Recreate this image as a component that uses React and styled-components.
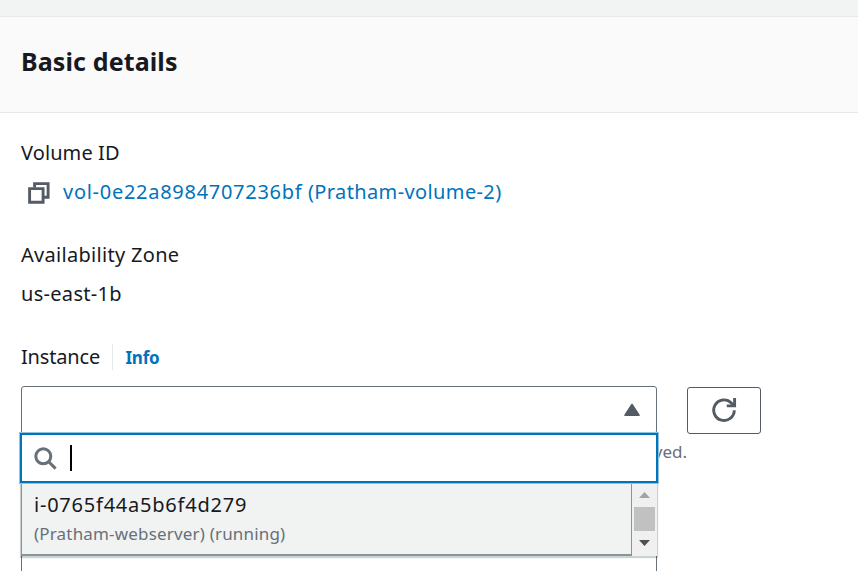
import React from 'react';
import styled, { createGlobalStyle } from 'styled-components';

const GlobalStyle = createGlobalStyle`
  * { box-sizing: border-box; }
  body {
    margin: 0;
    background: #fff;
    color: #16191f;
    font-family: "Noto Sans", "Open Sans", sans-serif;
    overflow: hidden;
  }
`;

const Page = styled.main`
  height: 571px;
  overflow: hidden;
  display: flex;
  flex-direction: column;
  background: #fff;
`;

const TopStrip = styled.div`
  flex: none;
  height: 16px;
  background: #f2f3f3;
`;

const PanelHeader = styled.header`
  flex: none;
  height: 97px;
  padding: 0 21px 7px;
  display: flex;
  align-items: center;
  background: #fafafa;
  border-top: 1px solid #e4e9e9;
  border-bottom: 1px solid #e4e9e9;
`;

const Title = styled.h2`
  margin: 0;
  font-size: 25px;
  line-height: 36px;
  font-weight: 700;
  letter-spacing: 0.12px;
`;

const PanelBody = styled.section`
  padding: 25px 0 0 21px;
`;

const Field = styled.div`
  display: flex;
  flex-direction: column;
  gap: 9px;
  margin-bottom: 33px;
`;

const Text = styled.div`
  height: 30px;
  font-size: 20px;
  line-height: 30px;
  white-space: nowrap;
  letter-spacing: ${(p) => p.$spacing || 0}px;
`;

const LinkRow = styled.div`
  display: flex;
  align-items: center;
  height: 30px;
  padding-left: 7px;
  gap: 13px;
`;

const CopySvg = styled.svg`
  flex: none;
  margin-top: 2px;
`;

const VolumeLink = styled.a`
  color: #0073bb;
  font-size: 20px;
  line-height: 30px;
  letter-spacing: 0.38px;
  white-space: nowrap;
`;

const VolumeId = styled.span`
  letter-spacing: 0.72px;
`;

const LabelRow = styled.div`
  display: flex;
  align-items: center;
  height: 30px;
`;

const InfoLink = styled.a`
  height: 26px;
  margin-left: 12px;
  padding-left: 12.4px;
  border-left: 1px solid #e4e9e9;
  color: #0073bb;
  font-size: 17px;
  line-height: 28px;
  font-weight: 700;
  letter-spacing: -0.2px;
`;

const ControlRow = styled.div`
  position: relative;
  display: flex;
  align-items: flex-start;
  gap: 30px;
  margin-top: 14px;
`;

const SelectBox = styled.div`
  width: 636px;
  height: 48px;
  padding-right: 16px;
  display: flex;
  align-items: center;
  justify-content: flex-end;
  border: 1px solid #687078;
  border-radius: 3px;
`;

const RefreshButton = styled.button`
  width: 74px;
  height: 47px;
  margin-top: 1px;
  padding: 0 0 2px;
  display: flex;
  align-items: center;
  justify-content: center;
  border: 1px solid #545b64;
  border-radius: 3px;
  background: #fff;
`;

const Hint = styled.div`
  width: 666px;
  height: 26px;
  margin-top: 5px;
  color: #687078;
  font-size: 17px;
  line-height: 26px;
  text-align: right;
`;

const NextField = styled.div`
  width: 636px;
  height: 60px;
  margin-top: 80px;
  border: 1px solid #687078;
  border-radius: 3px;
`;

const Dropdown = styled.div`
  position: absolute;
  top: 47px;
  left: -1px;
  width: 638px;
`;

const SearchField = styled.div`
  position: relative;
  z-index: 1;
  display: flex;
  align-items: center;
  height: 50px;
  padding-left: 12px;
  background: #fff;
  border: 2px solid #0073bb;
  box-shadow: 0 0 0 1px #8fc3de;
`;

const Caret = styled.span`
  width: 2px;
  height: 26px;
  margin-left: 13px;
  background: #000;
`;

const OptionPanel = styled.div`
  display: flex;
  height: 73px;
  margin: 0 1px;
  background: #f0f0f0;
  box-shadow: 0 1px 1px 1px rgba(0, 28, 36, 0.2);
`;

const Option = styled.div`
  width: 611px;
  padding: 6px 0 0 12px;
  background: #f1f3f3;
  border: 1px solid #879596;
  border-top: 0;
  border-bottom-width: 2px;
`;

const OptionTitle = styled.div`
  height: 32px;
  font-size: 20px;
  line-height: 32px;
  letter-spacing: 0.77px;
`;

const OptionDetail = styled.div`
  height: 25px;
  color: #687078;
  font-size: 17px;
  line-height: 25px;
  letter-spacing: 0.18px;
`;

const Scrollbar = styled.div`
  flex: 1;
  padding: 9px 0 0 2px;
  display: flex;
  flex-direction: column;
  align-items: flex-start;
`;

const ScrollArrow = styled.svg`
  flex: none;
  margin-left: 5px;
`;

const Thumb = styled.div`
  width: 21px;
  height: 24px;
  margin: 9px 0;
  background: #c1c1c1;
`;

const CopyIcon = () => (
  <CopySvg width="22" height="22" viewBox="0 0 22 22" fill="none" stroke="#545b64" strokeWidth="2.9">
    <path d="M6.6 5.5V1.6H20.1V15.3H16" />
    <path d="M1.6 6.6H15.1V20.2H1.6Z" />
  </CopySvg>
);

const RefreshIcon = () => (
  <svg width="26" height="26" viewBox="0 0 26 26" fill="none" stroke="#545b64" strokeWidth="2.9">
    <path d="M23.3 13.2A10.3 10.3 0 1 1 20.3 5.9L22.6 8.2" />
    <path d="M23.6 1V8.9H15.8" />
  </svg>
);

const SearchIcon = () => (
  <svg width="23" height="23" viewBox="0 0 23 23" fill="none" stroke="#687078" strokeWidth="3">
    <circle cx="9.3" cy="9.3" r="7.5" />
    <path d="M14.5 14.5L21.6 21.6" />
  </svg>
);

const CaretUp = () => (
  <svg width="16" height="14" viewBox="0 0 16 14" fill="#545b64" stroke="#545b64" strokeWidth="1.6" strokeLinejoin="round">
    <path d="M8 1.5L15 12.2H1Z" />
  </svg>
);

export default function App() {
  return (
    <Page>
      <GlobalStyle />
      <TopStrip />
      <PanelHeader>
        <Title>Basic details</Title>
      </PanelHeader>
      <PanelBody>
        <Field>
          <Text $spacing={0.1}>Volume ID</Text>
          <LinkRow>
            <CopyIcon />
            <VolumeLink>
              <VolumeId>vol-0e22a8984707236bf</VolumeId> (Pratham-volume-2)
            </VolumeLink>
          </LinkRow>
        </Field>
        <Field>
          <Text $spacing={0.3}>Availability Zone</Text>
          <Text $spacing={0.3}>us-east-1b</Text>
        </Field>
        <LabelRow>
          <Text $spacing={-0.17}>Instance</Text>
          <InfoLink>Info</InfoLink>
        </LabelRow>
        <ControlRow>
          <SelectBox>
            <CaretUp />
          </SelectBox>
          <RefreshButton aria-label="Refresh">
            <RefreshIcon />
          </RefreshButton>
          <Dropdown>
            <SearchField>
              <SearchIcon />
              <Caret />
            </SearchField>
            <OptionPanel>
              <Option>
                <OptionTitle>i-0765f44a5b6f4d279</OptionTitle>
                <OptionDetail>(Pratham-webserver) (running)</OptionDetail>
              </Option>
              <Scrollbar>
                <ScrollArrow width="11" height="6" viewBox="0 0 11 6" fill="#a3a3a3">
                  <path d="M5.5 0L11 6H0Z" />
                </ScrollArrow>
                <Thumb />
                <ScrollArrow width="11" height="6" viewBox="0 0 11 6" fill="#505050">
                  <path d="M0 0H11L5.5 6Z" />
                </ScrollArrow>
              </Scrollbar>
            </OptionPanel>
          </Dropdown>
        </ControlRow>
        <Hint>yed.</Hint>
        <NextField />
      </PanelBody>
    </Page>
  );
}
